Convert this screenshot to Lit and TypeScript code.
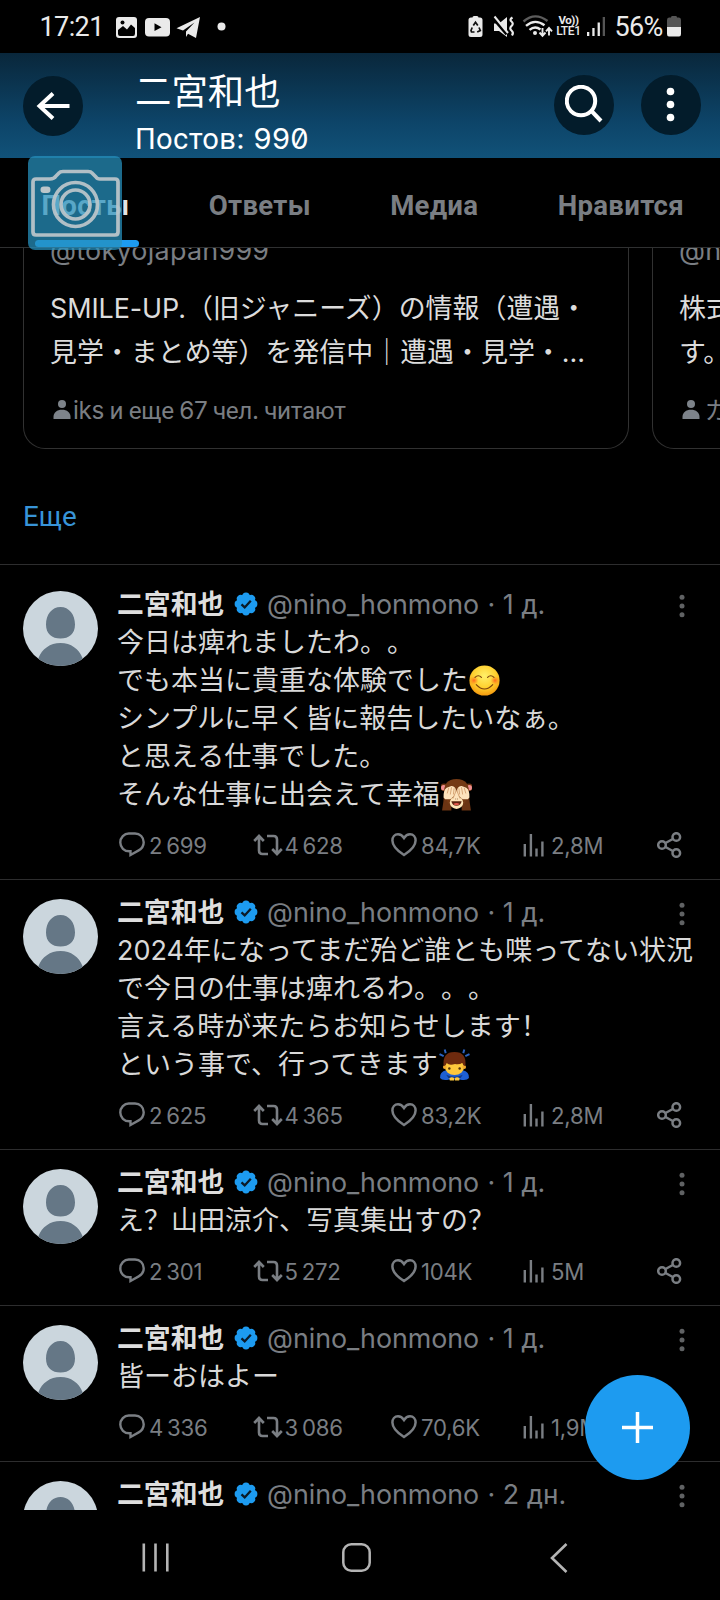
import { LitElement, html, svg, css, nothing } from "lit";
import { customElement, property } from "lit/decorators.js";

type Emoji = "smile" | "monkey" | "bow";
interface Line { text: string; emoji?: Emoji; }
interface Post { age: string; lines: Line[]; stats: string[]; }

const posts: Post[] = [
  {
    age: "1 д.",
    lines: [
      { text: "今日は痺れましたわ。。" },
      { text: "でも本当に貴重な体験でした", emoji: "smile" },
      { text: "シンプルに早く皆に報告したいなぁ。" },
      { text: "と思える仕事でした。" },
      { text: "そんな仕事に出会えて幸福", emoji: "monkey" },
    ],
    stats: ["2 699", "4 628", "84,7K", "2,8M"],
  },
  {
    age: "1 д.",
    lines: [
      { text: "2024年になってまだ殆ど誰とも喋ってない状況" },
      { text: "で今日の仕事は痺れるわ。。。" },
      { text: "言える時が来たらお知らせします！" },
      { text: "という事で、行ってきます", emoji: "bow" },
    ],
    stats: ["2 625", "4 365", "83,2K", "2,8M"],
  },
  { age: "1 д.", lines: [{ text: "え？山田涼介、写真集出すの？" }], stats: ["2 301", "5 272", "104K", "5M"] },
  { age: "1 д.", lines: [{ text: "皆ーおはよー" }], stats: ["4 336", "3 086", "70,6K", "1,9M"] },
  { age: "2 дн.", lines: [{ text: "" }], stats: ["", "", "", ""] },
];

const emojiArt: Record<Emoji, unknown> = {
  smile: svg`
    <defs>
      <radialGradient id="face" cx=".5" cy=".35" r=".65">
        <stop offset="0" stop-color="#fff06a"/><stop offset=".6" stop-color="#ffd02e"/><stop offset="1" stop-color="#f59a0e"/>
      </radialGradient>
      <radialGradient id="blush"><stop offset="0" stop-color="#ff6a1e"/><stop offset="1" stop-color="#ff8a1e" stop-opacity="0"/></radialGradient>
    </defs>
    <circle cx="15" cy="15" r="14.6" fill="url(#face)"/>
    <circle cx="4.8" cy="15" r="4.4" fill="url(#blush)"/><circle cx="25.2" cy="15" r="4.4" fill="url(#blush)"/>
    <g fill="none" stroke="#7a3f0c" stroke-width="1.1" stroke-linecap="round">
      <path d="M5.8 12Q9 8.8 12 12M18 12Q21 8.8 24.2 12M7 19Q15 27.6 23 19"/>
    </g>`,
  monkey: svg`
    <path d="M1 30.5Q2.5 22 3 14H10V30.5ZM29 30.5Q27.5 22 27 14H20V30.5Z" fill="#6b3413"/>
    <circle cx="3" cy="8" r="3.6" fill="#6b3413"/><circle cx="27" cy="8" r="3.6" fill="#6b3413"/>
    <circle cx="2.6" cy="8.4" r="2.6" fill="#f08f8f"/><circle cx="27.4" cy="8.4" r="2.6" fill="#f08f8f"/>
    <path d="M3 15Q2 0 15 0T27 15L23 24H7Z" fill="#743a15"/>
    <ellipse cx="15" cy="23" rx="6.5" ry="6" fill="#ffe6b8"/>
    <path d="M10 21.5H20Q19 26 15 26T10 21.5" fill="#5b2310"/>
    <path d="M11.8 24.2Q15 22.4 18.2 24.2Q15 26.6 11.8 24.2" fill="#e0574b"/>
    <path d="M2.5 18Q2 11 5.5 8.5L10 6.8Q13.5 7 14.3 10L14.5 15L9 19.5H4ZM27.5 18Q28 11 24.5 8.5L20 6.8Q16.5 7 15.7 10L15.5 15L21 19.5H26Z" fill="#fde3bd"/>
    <path d="M15 11L11 20.5H19Z" fill="#fde3bd"/>
    <path d="M6 14L7.5 8.5M9 15L10.2 8M12 15L12.7 9M24 14L22.5 8.5M21 15L19.8 8M18 15L17.3 9M14.8 11L11.5 19M15.2 11L18.5 19" stroke="#d09a68" stroke-width=".8" fill="none"/>
    <path d="M14 19.3H14.6M15.600 19.3H16.2" stroke="#7b4a22" stroke-width="1"/>`,
  bow: svg`
    <path d="M.5 5L4.500 7M5.500 .5L6.500 4M29.500 5L25.500 7M24.500 .5L23.500 4" stroke="#2d63c0" stroke-width="1.900" fill="none"/>
    <path d="M1 28Q.5 22 7 20.500H23Q29.500 22 29 28Q27 31 20 29.500H10Q3 31 1 28Z" fill="#1e5fd2"/>
    <path d="M7 25Q15 29 23 25L21 28H9Z" fill="#133a86"/>
    <ellipse cx="15" cy="17.500" rx="9.300" ry="7.800" fill="#fdc73c"/>
    <circle cx="5.600" cy="17.500" r="1.800" fill="#f2a92c"/><circle cx="24.400" cy="17.500" r="1.800" fill="#f2a92c"/>
    <path d="M4.500 16.500Q3 3 15 3T25.500 16.500Q23 16 22.600 13.200Q20 15.500 15.500 14.600Q10 16.500 7.400 13.600Q7 16 4.500 16.500Z" fill="#6e2a0e"/>
    <circle cx="10" cy="18.800" r="1.200" fill="#50300c"/><circle cx="20" cy="18.800" r="1.200" fill="#50300c"/>
    <path d="M10 28.500Q12 26.500 14.600 28V30.600H10.500ZM20 28.500Q18 26.500 15.400 28V30.600H19.500Z" fill="#fdc73c"/>`,
};

/** Wraps Cyrillic runs so they take the Cyrillic face. */
const mix = (text: string) =>
  text
    .split(/([\u0400-\u04FF]+)/)
    .filter((s) => s)
    .map((s) => (/[\u0400-\u04FF]/.test(s) ? html`<span class="cy">${s}</span>` : s));

const person = html`<svg class="person" width="18" height="20" viewBox="0 0 18 20" fill="#7d838a">
  <circle cx="9" cy="4" r="4"/><path d="M.5 19V17C.5 12.500 4 9.800 9 9.800S17.500 12.500 17.500 17V19Z"/></svg>`;

const base = css`
  :host { display: block; box-sizing: border-box; text-spacing-trim: space-all; }
  * { box-sizing: border-box; }
  svg { display: block; flex: none; }
  .cy { font-family: Roboto, sans-serif; }
`;

@customElement("status-bar")
export class StatusBar extends LitElement {
  static styles = [base, css`
    :host { height: 53px; padding: 0 39px 0 39.5px; color: #eaeaea; font-family: Roboto, sans-serif; font-size: 27px; }
    .row { display: flex; align-items: center; height: 53px; }
    .time { width: 76.5px; letter-spacing: -0.6px; }
    .pct { width: 52.5px; white-space: nowrap; letter-spacing: -0.7px; }
    .grow { flex: 1; }
    .volte { width: 27px; margin-right: 5px; font-size: 11.5px; line-height: 11.5px; font-weight: 700; text-align: center; letter-spacing: -0.4px; display: grid; justify-content: center; }
    .vo { height: 11px; }
    .lte { font-size: 12px; letter-spacing: -0.3px; height: 12px; font-weight: 500; }
  `];
  render() {
    return html`<div class="row">
      <span class="time">17:21</span>
      <svg width="101" height="24" viewBox="0 0 101 24" fill="#eaeaea">
        <rect x="0" y="2" width="21" height="21" rx="3"/>
        <path d="M2 15L7 11L11 14.500L15 9.500L19 13V18.500Q19 21 17 21H4Q2 21 2 19Z" fill="#000"/>
        <circle cx="6.500" cy="7.500" r="2" fill="#000"/>
        <rect x="29" y="3" width="25" height="18.500" rx="4"/>
        <path d="M38.500 8.300V16L45.500 12.200Z" fill="#000"/>
        <path d="M60.500 13.200L84 2L80 23L72 18.800L70 22V16.500L78.500 7.500L67 15.500Z"/>
      </svg>
      <svg width="10" height="10" viewBox="0 0 10 10" fill="#eaeaea"><circle cx="4.500" cy="4.500" r="4"/></svg>
      <span class="grow"></span>
      <svg width="87" height="24" viewBox="0 0 87 24" fill="#eaeaea">
        <path d="M4.500 2.500Q4.500 1 6 1H9Q10.500 1 10.500 2.500H12Q14.500 2.500 14.500 5V19.500Q14.500 22 12 22H3Q.5 22 .5 19.500V5Q.5 2.500 3 2.500Z"/>
        <g fill="none" stroke="#111" stroke-width="1.700"><path d="M5.300 10.500L7.500 7.200L9.800 10.500M11 12.500L12.300 15.500L9.200 17M6.500 17H3.500L3 15.500L4.200 12.500"/></g>
        <path d="M26 8.500H31L39 2V22L31 16H26Z"/>
        <path d="M25 2.500L39 19" stroke="#000" stroke-width="3.600"/>
        <path d="M26.500 1.500L40 18" stroke="#eaeaea" stroke-width="2"/>
        <path d="M44.500 2.500Q41 4.500 43.500 6.500T43.500 11T43.500 15.500T44 20.500" stroke="#eaeaea" stroke-width="2.200" fill="none"/>
        <g fill="none" stroke-width="2.400">
          <path d="M55.500 6.500Q67 -3.500 79.500 6" stroke="#5c5c5c"/>
          <path d="M58 10.800Q67 3.200 76.500 10.300M61.500 14.800Q67 10.200 72.500 14.500" stroke="#eaeaea"/>
        </g>
        <circle cx="67" cy="18" r="2"/>
        <path d="M74.500 13V20M71.500 17.500L74.500 20.800L77.500 17.500M81 20.500V13.500M78 16.300L81 13L84 16.300" fill="none" stroke="#eaeaea" stroke-width="1.900"/>
      </svg>
      <span class="volte"><span class="vo">Vo))</span><span class="lte">LTE1</span></span>
      <svg width="27.500" height="20" viewBox="0 0 27.500 20"><path d="M0 15H2.300V19H0ZM5.300 11H7.600V19H5.300ZM10.600 5.500H12.900V19H10.600Z" fill="#eaeaea"/><path d="M15.700 0H18V19H15.700Z" fill="#555"/></svg>
      <span class="pct">56%</span>
      <svg width="14" height="21" viewBox="0 0 14 21"><path d="M4 1.500Q4 0 5 0H9Q10 0 10 1.500H12Q14 1.500 14 4V11H0V4Q0 1.500 2 1.500Z" fill="#555"/><path d="M0 11H14V18Q14 20.500 12 20.500H2Q0 20.500 0 18Z" fill="#eaeaea"/></svg>
    </div>`;
  }
}

@customElement("profile-header")
export class ProfileHeader extends LitElement {
  static styles = [base, css`
    :host { height: 105px; background: linear-gradient(#09273b, #0d4468 65%, #115279); color: #fff; }
    .row { display: flex; height: 105px; padding: 22px 19px 0 23px; align-items: flex-start; }
    .round { width: 60px; height: 60px; border-radius: 50%; background: #031c2b; display: grid; place-items: center; flex: none; }
    .back { margin-top: 1px; }
    .title { flex: 1; margin: -13px 0 0 52px; }
    .name { font: 400 36.4px/54px "Noto Sans CJK SC", sans-serif; height: 54px; }
    .count { font: 400 29.1px/34px Inter, sans-serif; font-feature-settings: "zero" 1; margin: 6px 0 0 0; letter-spacing: 0.35px; }
    .gap { width: 27px; }
  `];
  render() {
    return html`<div class="row">
      <div class="round back"><svg width="34" height="30" viewBox="0 0 34 30" fill="none" stroke="#fff" stroke-width="4"><path d="M33.500 15H3M17 2.500L3.500 15L17 27.500"/></svg></div>
      <div class="title"><div class="name">二宮和也</div><div class="count">${mix("Постов: 990")}</div></div>
      <div class="round"><svg width="38" height="40" viewBox="0 0 38 40" fill="none" stroke="#fff" stroke-width="4"><circle cx="16" cy="16" r="14.200"/><path d="M26.500 26L36 36"/></svg></div>
      <span class="gap"></span>
      <div class="round"><svg width="10" height="36" viewBox="0 0 10 36" fill="#fff"><circle cx="4.500" cy="4.500" r="3.800"/><circle cx="4.500" cy="17.500" r="3.800"/><circle cx="4.500" cy="30.500" r="3.800"/></svg></div>
    </div>`;
  }
}

@customElement("profile-tabs")
export class ProfileTabs extends LitElement {
  static styles = [base, css`
    :host { height: 90px; border-bottom: 1px solid #2f3031; position: relative; z-index: 2; }
    .tabs { display: flex; height: 89px; padding: 0 36px 0 41.5px; justify-content: space-between; font: 700 27.6px/95.5px Roboto, sans-serif; letter-spacing: 0.3px; color: #7a7e83; }
    .active { color: #e4e4e4; }
    .line { position: absolute; left: 35px; bottom: 0; width: 104px; height: 7px; border-radius: 3.5px; background: #1d9bf0; }
    .camera { position: absolute; left: 28px; top: -2px; width: 94px; height: 94px; border-radius: 7px; background: rgba(38, 144, 190, 0.735); }
  `];
  render() {
    return html`<div class="tabs">
        <span class="active">Посты</span><span>Ответы</span><span>Медиа</span><span>Нравится</span>
      </div>
      <div class="line"></div>
      <div class="camera"><svg width="94" height="94" viewBox="0 0 94 94" fill="none" stroke="#bcc6ca" stroke-opacity=".93" stroke-width="3.700" stroke-linejoin="round">
        <path d="M8 23H22Q26 23 28 20L31 17Q32 15.500 35 15.500H60Q63 15.500 64 17L68 21Q69 23 72 23H87Q90 23 90 26V76Q90 79 87 79H8Q5 79 5 76V26Q5 23 8 23Z"/>
        <circle cx="47.500" cy="48.500" r="22"/><circle cx="47.500" cy="48.500" r="14.500"/>
        <rect x="12.500" y="30.500" width="10" height="6.500" rx="3.200" fill="#bcc6ca" stroke="none"/>
      </svg></div>`;
  }
}

@customElement("who-to-follow")
export class WhoToFollow extends LitElement {
  static styles = [base, css`
    :host { height: 316px; overflow: hidden; }
    .cards { display: flex; gap: 23px; padding-left: 23px; height: 200.5px; }
    .card { flex: none; width: 606px; border: 1px solid #313131; border-top: 0; border-radius: 0 0 22px 22px; padding: 0 0 0 26px; font: 400 26.95px/44px Inter, "Noto Sans CJK SC", sans-serif; color: #dcdcdc; white-space: nowrap; }
    .handle { color: #7a7e83; line-height: 40px; height: 40px; margin-top: -17px; letter-spacing: 0.25px; }
    .bio { height: 88px; margin-top: 16px; }
    .bio div { height: 44px; }
    .smile { letter-spacing: -0.1px; }
    .by { display: flex; align-items: center; gap: 2.5px; height: 34px; margin-top: 18px; color: #7a7e83; font-size: 24.3px; padding-left: 2.5px; line-height: 34px; letter-spacing: -0.35px; word-spacing: -0.95px; }
    .by.wide { gap: 5px; }
    .more { margin: 48px 0 0 23px; color: #3894d8; font: 400 27.8px/40px Roboto, sans-serif; }
  `];
  render() {
    return html`<div class="cards">
        <div class="card">
          <div class="handle">@tokyojapan999</div>
          <div class="bio"><div><span class="smile">SMILE-UP.</span>（旧ジャニーズ）の情報（遭遇・</div><div>見学・まとめ等）を発信中｜遭遇・見学・…</div></div>
          <div class="by">${person}<span>${mix("iks и еще 67 чел. читают")}</span></div>
        </div>
        <div class="card">
          <div class="handle">@ni</div>
          <div class="bio"><div>株式</div><div>す。</div></div>
          <div class="by wide">${person}<span>カ</span></div>
        </div>
      </div>
      <div class="more">Еще</div>`;
  }
}

@customElement("post-item")
export class PostItem extends LitElement {
  @property({ attribute: false }) post!: Post;
  static styles = [base, css`
    :host { border-top: 1px solid #2d2d2e; padding: 13px 0 22px 23px; display: flex; color: #d9d9d9; font: 400 27px/38px Inter, "Noto Sans CJK SC", sans-serif; }
    .avatar { margin: 6px 19px 0 0; }
    .main { flex: 1; }
    .head { display: flex; align-items: center; height: 39px; padding-bottom: 1px; color: #7a7e83; white-space: nowrap; font-size: 26.85px; }
    .name { width: 116.5px; margin-top: -2px; font-family: "Noto Sans CJK SC", sans-serif; font-weight: 700; color: #dedede; }
    .handle { margin-left: 9.5px; letter-spacing: -0.05px; width: 211px; }
    .age { margin-left: 9.5px; flex: 1; }
    .kebab { margin: 4px 33px 0 0; }
    .line { height: 38px; white-space: nowrap; display: flex; align-items: center; }
    .emoji { margin: -1px 0 0 1px; }
    .stats { display: grid; grid-template-columns: 134px 139px 132px 134px auto; height: 26px; margin-top: 17px; color: #7a7e83; font-size: 22.2px; line-height: 26px; letter-spacing: -0.25px; word-spacing: -2px; }
    .stat { display: flex; align-items: center; gap: 4px; white-space: nowrap; }
    .stat svg { margin-left: 1px; }
    .stat:first-child svg { margin-left: 2px; }
    .stat span { padding-top: 2px; }
    .tight { gap: 1.5px; }
    .stats .tight svg { margin-left: 2px; }
    .stats .bars { gap: 6px; }
  `];
  render() {
    const { age, lines, stats } = this.post;
    const stroke = "#7a7e83";
    return html`
      <svg class="avatar" width="75" height="75" viewBox="0 0 75 75">
        <clipPath id="c"><circle cx="37.500" cy="37.500" r="37.500"/></clipPath>
        <g clip-path="url(#c)"><rect width="75" height="75" fill="#cbd6dd"/>
        <path d="M37.500 16C46 16 52 23.500 52 33.500C52 43 46 47.500 37.500 47.500S23 43 23 33.500C23 23.500 29 16 37.500 16ZM37.500 52C48 52 56 58 59.500 67V76H15.500V67C19 58 27 52 37.500 52Z" fill="#657786"/></g>
      </svg>
      <div class="main">
        <div class="head">
          <span class="name">二宮和也</span>
          <svg width="24" height="24" viewBox="0 0 24 24"><g fill="#1d9bf0"><circle cx="12" cy="12" r="9.800"/>${[0, 45, 90, 135, 180, 225, 270, 315].map(
            (a) => svg`<circle cx="12" cy="4.300" r="3.700" transform=${`rotate(${a} 12 12)`}/>`)}</g>
            <path d="M7.500 12.300L10.700 15.400L16.800 8.700" fill="none" stroke="#0b1a28" stroke-width="2.300"/></svg>
          <span class="handle">@nino_honmono</span><span class="age">· ${mix(age)}</span>
          <svg class="kebab" width="10" height="24" viewBox="0 0 10 24" fill="#606264"><circle cx="5" cy="3.200" r="2.500"/><circle cx="5" cy="12" r="2.500"/><circle cx="5" cy="20.800" r="2.500"/></svg>
        </div>
        ${lines.map((l) => html`<div class="line"><span>${l.text}</span>${l.emoji
          ? html`<svg class="emoji" width="31" height="32" viewBox="0 0 30 31">${emojiArt[l.emoji]}</svg>` : nothing}</div>`)}
        <div class="stats">
          <div class="stat"><svg width="26" height="26" viewBox="0 0 26 26" fill="none" stroke=${stroke} stroke-width="2.400"><path d="M9.800 1.500H16C21 1.500 24.700 5.300 24.700 10.300C24.700 13.700 22.700 16.800 19.700 18.400L11.500 23V19.300H10.300C5.200 19.300 1.300 15.500 1.300 10.500C1.300 5.500 5.200 1.500 9.800 1.500Z"/></svg><span>${stats[0]}</span></div>
          <div class="stat tight"><svg width="30" height="24" viewBox="0 0 30 24" fill="none" stroke=${stroke} stroke-width="2.600"><path d="M1.200 8L6 3L10.800 8M6 3.500V17.500Q6 21 9.500 21H15M14 3H20.500Q24 3 24 6.500V20.500M19.200 16L24 21L28.800 16"/></svg><span>${stats[1]}</span></div>
          <div class="stat"><svg width="26" height="26" viewBox="0 0 26 26" fill="none" stroke=${stroke} stroke-width="2.500"><path d="M13 6C15 2.800 17.300 2.200 19 2.200C22.300 2.200 24.600 5 24.600 8.500C24.600 14.500 18.500 19.500 13 23C7.500 19.500 1.400 14.500 1.400 8.500C1.400 5 3.700 2.200 7 2.200C8.700 2.200 11 2.800 13 6Z"/></svg><span>${stats[2]}</span></div>
          <div class="stat bars"><svg width="22" height="26" viewBox="0 0 22 26" fill=${stroke}><path d="M.6 12H3V24.500H.6ZM6.700 2H9.100V24.500H6.700ZM12.300 16.500H14.700V24.500H12.300ZM18.200 9.500H20.600V24.500H18.200Z"/></svg><span>${stats[3]}</span></div>
          <div class="stat"><svg width="26" height="26" viewBox="0 0 26 26" fill="none" stroke=${stroke} stroke-width="2.500"><circle cx="5" cy="13" r="3.800"/><circle cx="19.300" cy="5" r="3.800"/><circle cx="19.300" cy="21" r="3.800"/><path d="M8.500 11L15.800 7M8.500 15L15.800 19"/></svg></div>
        </div>
      </div>`;
  }
}

@customElement("app-root")
export class AppRoot extends LitElement {
  static styles = [base, css`
    :host { display: flex; flex-direction: column; position: relative; width: 720px; height: 1600px; background: #000; overflow: hidden; }
    .feed { height: 1262px; overflow: hidden; flex: none; }
    .first { padding-top: 20px; }
    .fab { position: absolute; left: 585px; top: 1375px; width: 105px; height: 105px; border-radius: 50%; background: #1d9bf0; display: grid; place-items: center; }
    .nav { height: 90px; display: flex; align-items: center; padding: 5px 0 0 142px; }
    .home { margin: 0 179px 0 172px; }
  `];
  render() {
    return html`
      <status-bar></status-bar>
      <profile-header></profile-header>
      <profile-tabs></profile-tabs>
      <main class="feed">
        <who-to-follow></who-to-follow>
        ${posts.map((p, i) => html`<post-item class=${i === 0 ? "first" : ""} .post=${p}></post-item>`)}
      </main>
      <div class="fab"><svg width="31" height="31" viewBox="0 0 31 31" stroke="#fff" stroke-width="3.500"><path d="M15.500 0V31M0 15.500H31"/></svg></div>
      <nav class="nav">
        <svg width="28" height="29" viewBox="0 0 28 29" stroke="#b4b4b4" stroke-width="2.600"><path d="M1.800 .5V28.500M13.500 .5V28.500M25.300 .5V28.500"/></svg>
        <svg class="home" width="29" height="29" viewBox="0 0 29 29" fill="none" stroke="#b4b4b4" stroke-width="2.500"><rect x="1.300" y="1.300" width="26.400" height="26.400" rx="8"/></svg>
        <svg width="18" height="30" viewBox="0 0 18 30" fill="none" stroke="#b4b4b4" stroke-width="2.600"><path d="M16.500 1L2 15L16.500 29"/></svg>
      </nav>`;
  }
}
